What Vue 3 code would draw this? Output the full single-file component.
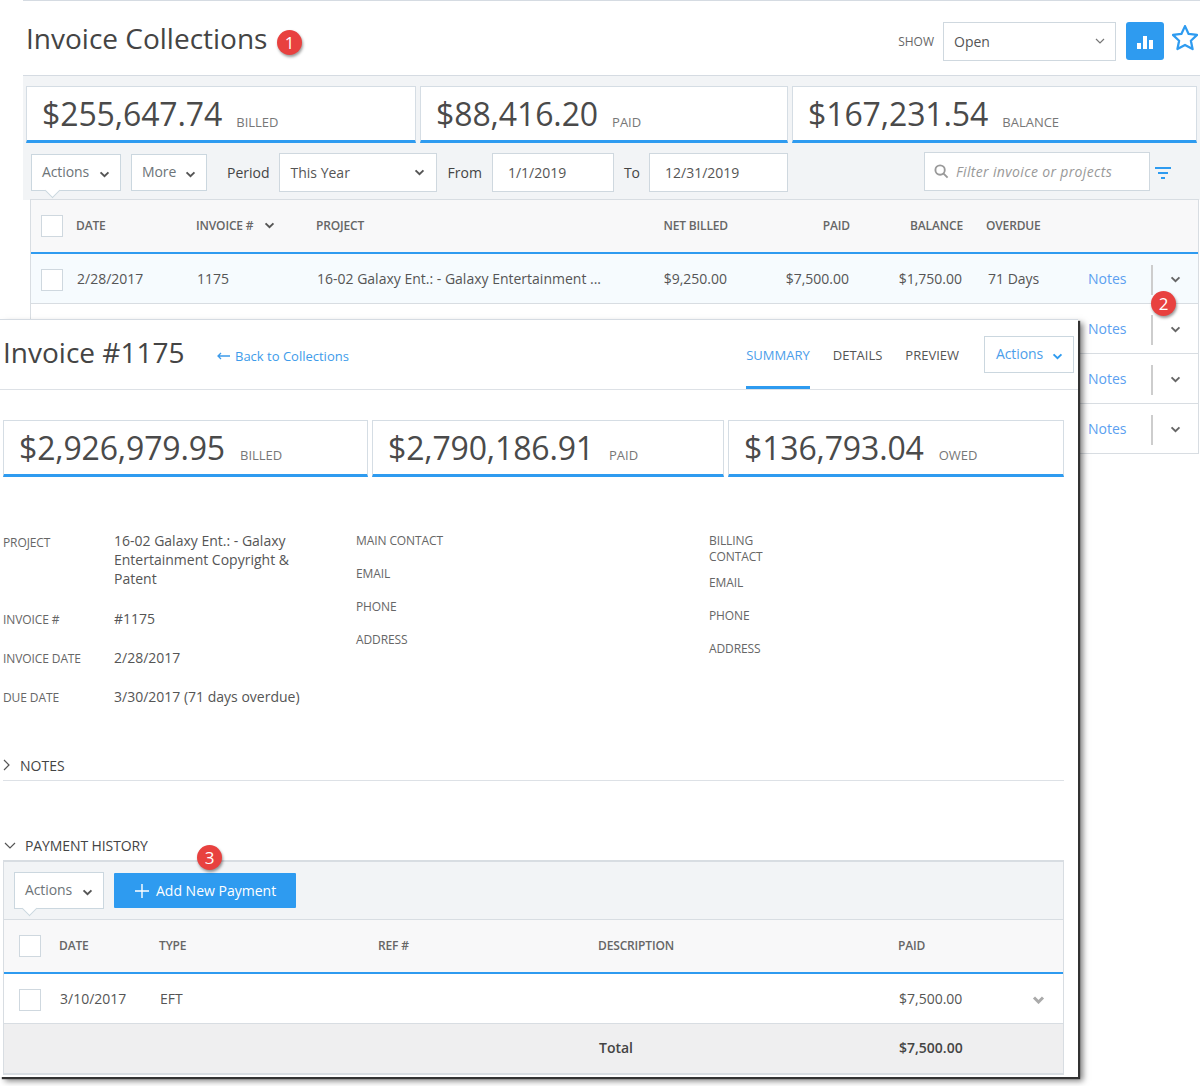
<script setup>
const rows = [
  { date: '2/28/2017', invoice: '1175', project: '16-02 Galaxy Ent.: - Galaxy Entertainment ...', net: '$9,250.00', paid: '$7,500.00', balance: '$1,750.00', overdue: '71 Days', active: true },
  { date: '', invoice: '', project: '', net: '', paid: '', balance: '', overdue: '' },
  { date: '', invoice: '', project: '', net: '', paid: '', balance: '', overdue: '' },
  { date: '', invoice: '', project: '', net: '', paid: '', balance: '', overdue: '' },
]

const contact = ['MAIN CONTACT', 'EMAIL', 'PHONE', 'ADDRESS']
const billing = ['EMAIL', 'PHONE', 'ADDRESS']
</script>

<template>
  <div class="page">
    <section class="collections">
      <header class="page-head">
        <h1 class="page-title">Invoice Collections</h1>
        <div class="head-right">
          <span class="show-label">SHOW</span>
          <div class="select show-select">
            <span>Open</span>
            <svg class="thin-chev" viewBox="0 0 10 6"><path d="M1 1l4 4 4-4" /></svg>
          </div>
          <button class="chart-btn">
            <svg viewBox="0 0 16 14" width="16" height="14"><path d="M0 8h4v6H0zM6 1h4v13H6zM12 5h4v9h-4z" fill="#fff" /></svg>
          </button>
          <svg class="star" viewBox="1.5 1.5 23 23" width="26" height="26">
            <path d="M13 2.5l3.2 6.9 7.5.9-5.5 5.1 1.5 7.4-6.7-3.7-6.7 3.7 1.5-7.4-5.5-5.1 7.5-.9z" />
          </svg>
        </div>
      </header>

      <div class="panel">
        <div class="stats top-stats">
          <div class="stat s1"><span class="amount">$255,647.74</span><span class="stat-label">BILLED</span></div>
          <div class="stat s2"><span class="amount">$88,416.20</span><span class="stat-label">PAID</span></div>
          <div class="stat s3"><span class="amount">$167,231.54</span><span class="stat-label">BALANCE</span></div>
        </div>

        <div class="toolbar">
          <div class="action-btn has-caret actions-top">Actions <svg class="chev" viewBox="0 0 12 8"><path d="M1.5 1.5L6 6l4.5-4.5" /></svg></div>
          <div class="action-btn more-btn">More <svg class="chev" viewBox="0 0 12 8"><path d="M1.5 1.5L6 6l4.5-4.5" /></svg></div>
          <span class="tool-label period-label">Period</span>
          <div class="select period-select">
            <span>This Year</span>
            <svg class="chev" viewBox="0 0 12 8"><path d="M1.5 1.5L6 6l4.5-4.5" /></svg>
          </div>
          <span class="tool-label from-label">From</span>
          <div class="select date-from">1/1/2019</div>
          <span class="tool-label to-label">To</span>
          <div class="select date-to">12/31/2019</div>
          <div class="search">
            <svg viewBox="0 0 16 16" width="15" height="15"><circle cx="6.5" cy="6.5" r="5" /><path d="M10.2 10.2L14.5 14.5" /></svg>
            <span>Filter invoice or projects</span>
          </div>
          <svg class="filter-icon" viewBox="0 0 16 12" width="16" height="12"><path d="M0 0h16v2H0zM3 5h10v2H3zM6 10h4v2H6z" fill="#2e9bf0" /></svg>
        </div>

        <div class="grid-table">
          <div class="t-row t-head">
            <div class="cell"><span class="check"></span></div>
            <div class="cell">DATE</div>
            <div class="cell">INVOICE # <svg class="chev sort" viewBox="0 0 12 8"><path d="M1.5 1.5L6 6l4.5-4.5" /></svg></div>
            <div class="cell">PROJECT</div>
            <div class="cell right">NET BILLED</div>
            <div class="cell right">PAID</div>
            <div class="cell right">BALANCE</div>
            <div class="cell overdue">OVERDUE</div>
            <div class="cell"></div>
            <div class="cell"></div>
          </div>
          <div v-for="(row, i) in rows" :key="i" class="t-row t-body" :class="{ active: row.active }">
            <div class="cell"><span v-if="row.active" class="check row-check"></span></div>
            <div class="cell nudge">{{ row.date }}</div>
            <div class="cell nudge">{{ row.invoice }}</div>
            <div class="cell nudge">{{ row.project }}</div>
            <div class="cell right nudge-r">{{ row.net }}</div>
            <div class="cell right nudge-r">{{ row.paid }}</div>
            <div class="cell right nudge-r">{{ row.balance }}</div>
            <div class="cell overdue nudge">{{ row.overdue }}</div>
            <div class="cell link">Notes</div>
            <div class="cell more-cell"><svg class="chev" viewBox="0 0 12 8"><path d="M1.5 1.5L6 6l4.5-4.5" /></svg></div>
          </div>
        </div>
      </div>
    </section>

    <section class="invoice-window">
      <header class="inv-head">
        <h2 class="inv-title">Invoice #1175</h2>
        <a class="back-link"><svg viewBox="0 0 14 8" width="14" height="8"><path d="M13 4H1.5M4 1L1 4l3 3" /></svg>Back to Collections</a>
        <nav class="tabs">
          <span class="tab current">SUMMARY</span>
          <span class="tab">DETAILS</span>
          <span class="tab">PREVIEW</span>
        </nav>
        <div class="action-btn inv-actions">Actions <svg class="chev blue" viewBox="0 0 12 8"><path d="M1.5 1.5L6 6l4.5-4.5" /></svg></div>
      </header>

      <div class="stats inv-stats">
        <div class="stat i1"><span class="amount">$2,926,979.95</span><span class="stat-label">BILLED</span></div>
        <div class="stat i2"><span class="amount">$2,790,186.91</span><span class="stat-label">PAID</span></div>
        <div class="stat i3"><span class="amount">$136,793.04</span><span class="stat-label">OWED</span></div>
      </div>

      <div class="info">
        <div class="info-main">
          <div class="info-row first"><span class="info-label">PROJECT</span><span class="info-value">16-02 Galaxy Ent.: - Galaxy Entertainment Copyright &amp; Patent</span></div>
          <div class="info-row"><span class="info-label">INVOICE #</span><span class="info-value">#1175</span></div>
          <div class="info-row"><span class="info-label">INVOICE DATE</span><span class="info-value">2/28/2017</span></div>
          <div class="info-row"><span class="info-label">DUE DATE</span><span class="info-value">3/30/2017 (71 days overdue)</span></div>
        </div>
        <div class="info-col contact-col">
          <span v-for="item in contact" :key="item" class="info-label">{{ item }}</span>
        </div>
        <div class="info-col billing-col">
          <span class="info-label billing-title">BILLING<br />CONTACT</span>
          <span v-for="item in billing" :key="item" class="info-label">{{ item }}</span>
        </div>
      </div>

      <div class="section-bar notes-bar">
        <svg class="sec-icon" viewBox="0 0 8 12" width="8" height="12"><path d="M1 1l5 5-5 5" /></svg>
        <span>NOTES</span>
      </div>

      <div class="section-bar history-bar">
        <svg class="sec-icon" viewBox="0 0 12 8" width="12" height="8"><path d="M1 1l5 5 5-5" /></svg>
        <span>PAYMENT HISTORY</span>
      </div>

      <div class="payments">
        <div class="pay-toolbar">
          <div class="action-btn has-caret pay-actions">Actions <svg class="chev" viewBox="0 0 12 8"><path d="M1.5 1.5L6 6l4.5-4.5" /></svg></div>
          <button class="add-btn">
            <svg viewBox="0 0 16 16" width="16" height="16"><path d="M8 1v14M1 8h14" /></svg>
            Add New Payment
          </button>
        </div>
        <div class="p-row p-head">
          <div class="cell"><span class="check"></span></div>
          <div class="cell">DATE</div>
          <div class="cell">TYPE</div>
          <div class="cell">REF #</div>
          <div class="cell">DESCRIPTION</div>
          <div class="cell">PAID</div>
          <div class="cell"></div>
        </div>
        <div class="p-row p-body">
          <div class="cell"><span class="check row-check"></span></div>
          <div class="cell nudge">3/10/2017</div>
          <div class="cell nudge">EFT</div>
          <div class="cell"></div>
          <div class="cell"></div>
          <div class="cell nudge">$7,500.00</div>
          <div class="cell"><svg class="chev light" viewBox="0 0 12 8"><path d="M1.5 1.5L6 6l4.5-4.5" /></svg></div>
        </div>
        <div class="p-row p-total">
          <div class="cell"></div>
          <div class="cell"></div>
          <div class="cell"></div>
          <div class="cell"></div>
          <div class="cell nudge total-label">Total</div>
          <div class="cell nudge total-value">$7,500.00</div>
          <div class="cell"></div>
        </div>
      </div>
    </section>

    <span class="badge b1">1</span>
    <span class="badge b2">2</span>
    <span class="badge b3">3</span>
  </div>
</template>

<style>
html,
body {
  margin: 0;
  background: #fff;
}
</style>

<style scoped>
* {
  box-sizing: border-box;
}

.page {
  position: relative;
  width: 1200px;
  height: 1086px;
  overflow: hidden;
  background: #fff;
  font-family: 'Open Sans', 'Liberation Sans', sans-serif;
  font-size: 14px;
  color: #555;
}

.collections {
  margin-left: 23px;
  border-top: 1px solid #d5dbe2;
}

.page-head {
  height: 75px;
  display: flex;
  align-items: center;
  justify-content: space-between;
  padding-left: 3px;
  border-bottom: 1px solid #d5dbe2;
}

.page-title {
  margin: 0;
  font-size: 28px;
  font-weight: 400;
  color: #444;
}

.head-right {
  display: flex;
  align-items: center;
  margin-right: 2px;
  position: relative;
  top: 3px;
}

.show-label {
  font-size: 12px;
  color: #666;
  margin-right: 9px;
}

.select {
  display: flex;
  align-items: center;
  justify-content: space-between;
  height: 39px;
  border: 1px solid #cfd8df;
  background: #fff;
  color: #555;
  padding: 0 11px 0 10px;
}

.show-select {
  width: 173px;
  padding-right: 10px;
}

.thin-chev {
  width: 10px;
  height: 6px;
  fill: none;
  stroke: #777;
  stroke-width: 1.2;
}

.chart-btn {
  width: 38px;
  height: 38px;
  margin-left: 10px;
  border: 0;
  border-radius: 3px;
  background: #2e9bf0;
  display: flex;
  align-items: center;
  justify-content: center;
  padding: 2px 0 0;
}

.star {
  position: relative;
  top: -3px;
  margin-left: 8px;
  fill: none;
  stroke: #2e9bf0;
  stroke-width: 2;
  stroke-linejoin: round;
}

.panel {
  background: #f2f4f6;
  padding: 10px 3px 0 3px;
  height: 124px;
}

.stats {
  display: flex;
  gap: 4px;
}

.stat {
  height: 57px;
  background: #fff;
  border: 1px solid #d5dde4;
  border-bottom: 3px solid #2e9bf0;
  padding-left: 15px;
  display: flex;
  align-items: baseline;
  padding-top: 5px;
}

.s1 { width: 390px; }
.s2 { width: 368px; }
.s3 { width: 405px; }
.i1 { width: 365px; }
.i2 { width: 352px; }
.i3 { width: 336px; }

.amount {
  font-size: 32px;
  line-height: 43px;
  color: #4a4a4a;
}

.top-stats .amount {
  letter-spacing: -0.1px;
}

.inv-stats .amount {
  letter-spacing: -0.15px;
}

.stat-label {
  margin-left: 15px;
  font-size: 13px;
  color: #777;
}

.top-stats .stat-label {
  position: relative;
  top: 1px;
  margin-left: 14px;
}

.toolbar {
  display: flex;
  align-items: center;
  height: 39px;
  margin-top: 10px;
  padding-left: 5px;
}

.action-btn {
  position: relative;
  display: flex;
  align-items: center;
  justify-content: space-between;
  height: 37px;
  border: 1px solid #cbd7df;
  background: #fff;
  padding: 0 10px 3px 10px;
  color: #6d7478;
  letter-spacing: -0.1px;
}

.action-btn .chev {
  position: relative;
  top: 3px;
}

.has-caret::after {
  content: '';
  position: absolute;
  left: 9px;
  bottom: -6px;
  width: 10px;
  height: 10px;
  background: #fff;
  border-right: 1px solid #cbd7df;
  border-bottom: 1px solid #cbd7df;
  transform: rotate(45deg);
  z-index: 2;
}

.actions-top {
  width: 90px;
}

.actions-top::after {
  left: 15px;
}

.more-btn {
  width: 76px;
  margin-left: 10px;
}

.chev {
  width: 11px;
  height: 7px;
  fill: none;
  stroke: #555;
  stroke-width: 2.2;
  flex: none;
}

.chev.blue {
  stroke: #2e9bf0;
}

.chev.light {
  width: 13px;
  height: 8px;
  margin-left: 19px;
  margin-top: 2px;
  stroke: #aaa;
  stroke-width: 3;
}

.chev.sort {
  margin-left: 11px;
}

.tool-label {
  color: #444;
}

.period-label {
  margin-left: 20px;
}

.period-select {
  width: 158px;
  margin-left: 9px;
  padding-left: 11px;
}

.from-label {
  margin-left: 11px;
}

.date-from {
  width: 122px;
  margin-left: 10px;
  padding-left: 15px;
}

.to-label {
  margin-left: 10px;
}

.date-to {
  width: 139px;
  margin-left: 9px;
  padding-left: 15px;
}

.search {
  width: 226px;
  height: 39px;
  margin-left: 136px;
  margin-top: -3px;
  border: 1px solid #cfd8df;
  background: #fff;
  display: flex;
  align-items: center;
  gap: 7px;
  padding-left: 9px;
  color: #999;
  font-style: italic;
  letter-spacing: 0.35px;
}

.search svg {
  fill: none;
  stroke: #999;
  stroke-width: 2;
}

.filter-icon {
  margin-left: 5px;
  flex: none;
}

.grid-table {
  position: relative;
  z-index: 1;
  width: 1169px;
  margin: 7px 0 0 4px;
  background: #fff;
  border: 1px solid #d8dde2;
  border-bottom: 0;
  color: #555;
}

.t-row {
  display: grid;
  grid-template-columns: 45px 120px 120px 304px 108px 122px 113px 125px 64px 46px;
  align-items: center;
}

.cell {
  display: flex;
  align-items: center;
  white-space: nowrap;
}

.cell.right {
  justify-content: flex-end;
}

.t-head {
  height: 54px;
  padding-bottom: 2px;
  background: #f8f8f9;
  border-bottom: 2px solid #2e9bf0;
  font-size: 12px;
  font-weight: 600;
  color: #666;
  letter-spacing: -0.15px;
}

.t-head .cell,
.p-head .cell {
  height: 100%;
}

.t-head .check,
.p-head .check {
  margin-top: 2px;
}

.t-body {
  height: 50px;
  border-bottom: 1px solid #d8dde2;
}

.t-body.active {
  background: #f6fbfe;
}

.check {
  display: block;
  width: 22px;
  height: 22px;
  background: #fff;
  border: 1px solid #cfd8df;
  margin-left: 10px;
}

.row-check {
  margin-top: 3px;
}

.nudge {
  padding-left: 1px;
}

.nudge-r {
  padding-right: 1px;
}

.overdue {
  padding-left: 23px;
}

.overdue.nudge {
  padding-left: 25px;
}

.link {
  color: #5b9ff0;
}

.more-cell {
  height: 30px;
  margin-top: 2px;
  margin-left: -1px;
  border-left: 2px solid #cdcdcd;
  justify-content: center;
}

.more-cell .chev {
  stroke: #666;
}

.invoice-window {
  position: absolute;
  left: 0;
  top: 319px;
  z-index: 3;
  width: 1078px;
  height: 758px;
  background: #fff;
  border-top: 1px solid #d5dbe2;
  box-shadow: 2px 2px 1px #333, 5px 4px 6px rgba(0, 0, 0, 0.5);
}

.inv-head {
  height: 70px;
  display: flex;
  align-items: center;
  border-bottom: 1px solid #dde1e6;
  padding-left: 3px;
}

.inv-title {
  margin: 0;
  font-size: 28px;
  font-weight: 400;
  color: #444;
  width: 214px;
  position: relative;
  top: -3px;
}

.back-link {
  display: flex;
  align-items: center;
  gap: 4px;
  font-size: 13px;
  color: #3d9bea;
  position: relative;
  top: 1px;
}

.back-link svg {
  fill: none;
  stroke: #3d9bea;
  stroke-width: 1.3;
}

.tabs {
  display: flex;
  gap: 23px;
  height: 100%;
  margin-left: auto;
  margin-right: 25px;
}

.tab {
  display: flex;
  align-items: center;
  padding-top: 4px;
  font-size: 13px;
  color: #555;
  border-bottom: 3px solid transparent;
}

.tab.current {
  color: #4c9eea;
  border-bottom-color: #2e9bf0;
}

.inv-actions {
  width: 90px;
  margin-right: 4px;
  padding-left: 11px;
  color: #4c9eea;
}

.inv-stats {
  margin: 30px 0 0 3px;
}

.info {
  display: flex;
  height: 278px;
  padding-top: 54px;
  padding-left: 3px;
}

.info-label {
  font-size: 12px;
  color: #666;
  letter-spacing: -0.1px;
}

.info-value {
  font-size: 14px;
  line-height: 19px;
  color: #555;
  width: 190px;
}

.info-main {
  width: 353px;
}

.info-row {
  display: grid;
  grid-template-columns: 111px 1fr;
  align-items: start;
  height: 39px;
}

.info-row .info-value {
  width: 200px;
  white-space: nowrap;
}

.info-row.first {
  height: 78px;
}

.info-row.first .info-value {
  white-space: normal;
  width: 190px;
}

.info-row .info-label {
  line-height: 19px;
  padding-top: 1px;
}

.info-row.first .info-label {
  padding-top: 2px;
}

.info-col {
  display: flex;
  flex-direction: column;
  line-height: 16px;
}

.contact-col {
  width: 353px;
  gap: 17px;
  margin-top: 2px;
}

.billing-col {
  gap: 17px;
  margin-top: 2px;
}

.billing-title {
  margin-bottom: -7px;
}

.section-bar {
  display: flex;
  align-items: center;
  margin-left: 3px;
  font-size: 14px;
  color: #444;
}

.sec-icon {
  fill: none;
  stroke: #555;
  stroke-width: 1.2;
}

.notes-bar {
  width: 1061px;
  height: 26px;
  padding-bottom: 5px;
  border-bottom: 1px solid #dde1e6;
  gap: 9px;
}

.history-bar {
  height: 24px;
  margin-top: 55px;
  padding-bottom: 5px;
  padding-left: 1px;
  gap: 9px;
  letter-spacing: -0.1px;
}

.payments {
  width: 1061px;
  margin-left: 3px;
  border: 1px solid #d8dde2;
  border-top: 2px solid #d8dde2;
  border-bottom: 2px solid #d8dde2;
}

.pay-toolbar {
  height: 58px;
  background: #f2f4f6;
  border-bottom: 1px solid #d8dde2;
  display: flex;
  align-items: center;
  gap: 10px;
  padding-left: 10px;
}

.pay-actions {
  width: 90px;
  color: #6d7478;
}

.add-btn {
  display: flex;
  align-items: center;
  gap: 6px;
  width: 182px;
  height: 35px;
  border: 0;
  border-radius: 1px;
  padding-left: 20px;
  background: #2e9bf0;
  color: #fff;
  font-family: inherit;
  font-size: 14px;
}

.add-btn svg {
  fill: none;
  stroke: #fff;
  stroke-width: 1.4;
}

.p-row {
  display: grid;
  grid-template-columns: 55px 100px 219px 220px 300px 115px 50px;
  align-items: center;
}

.p-row .check {
  margin-left: 15px;
}

.p-head {
  height: 54px;
  padding-bottom: 2px;
  background: #f8f8f9;
  border-bottom: 2px solid #2e9bf0;
  font-size: 12px;
  font-weight: 600;
  color: #666;
  letter-spacing: -0.15px;
}

.p-body {
  height: 50px;
  border-bottom: 1px solid #d8dde2;
}

.p-total {
  height: 49px;
  padding-bottom: 2px;
  background: #efeff0;
}

.total-label,
.total-value {
  font-weight: 600;
  color: #444;
}

.badge {
  position: absolute;
  z-index: 5;
  width: 25px;
  height: 25px;
  border-radius: 50%;
  background: #e8413f;
  color: #fff;
  font-size: 17px;
  line-height: 25px;
  text-align: center;
  box-shadow: 1px 2px 3px rgba(0, 0, 0, 0.4);
}

.b1 { left: 277px; top: 30px; }
.b2 { left: 1151px; top: 291px; }
.b3 { left: 197px; top: 845px; }
</style>
